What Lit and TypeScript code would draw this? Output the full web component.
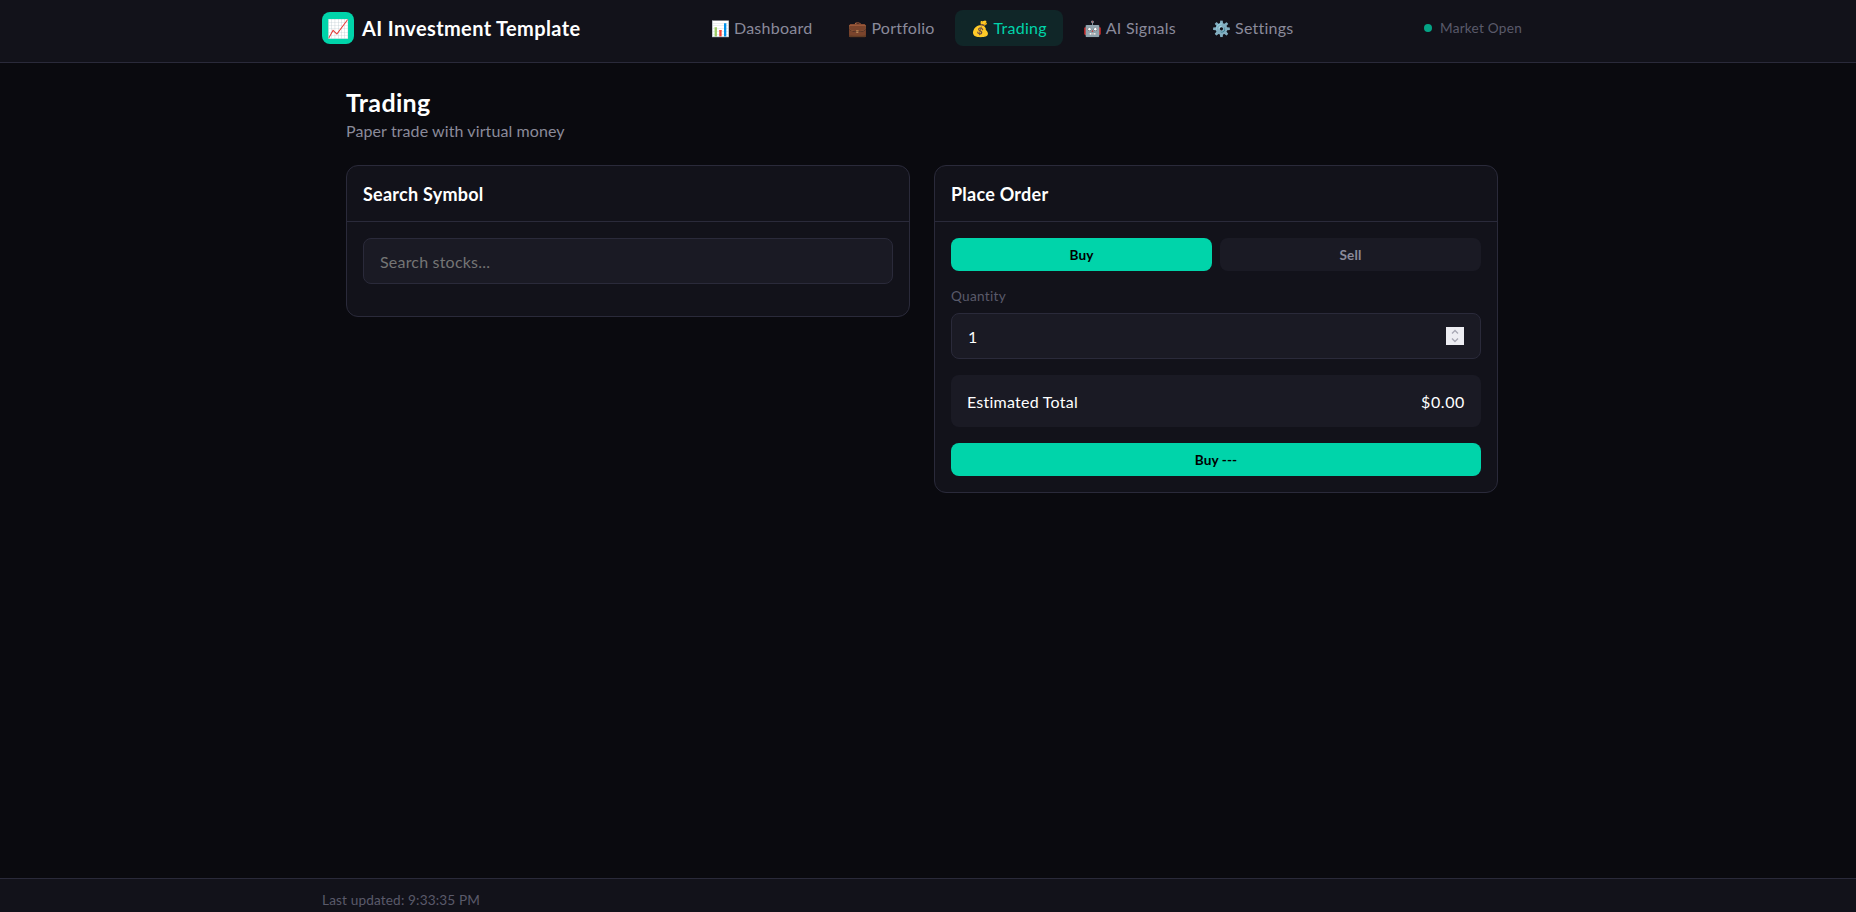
import { css, html, LitElement } from 'lit';
import { customElement } from 'lit/decorators.js';

const NAV = [
  { icon: '📊', label: 'Dashboard' },
  { icon: '💼', label: 'Portfolio' },
  { icon: '💰', label: 'Trading', active: true },
  { icon: '🤖', label: 'AI Signals' },
  { icon: '⚙️', label: 'Settings' },
];

@customElement('app-root')
export class AppRoot extends LitElement {
  static override styles = css`
    :host {
      display: flex;
      flex-direction: column;
      height: 912px;
      overflow: hidden;
      background: #0a0a0f;
      color: #fff;
      font-family: 'Lato', sans-serif;
    }

    .header {
      flex: 0 0 auto;
      height: 62px;
      background: #12121a;
      border-bottom: 1px solid #2a2a3a;
    }

    .wrap {
      width: 1200px;
      margin-inline-start: 322px;
    }

    .header .wrap {
      display: flex;
      align-items: center;
      justify-content: space-between;
      height: 56px;
    }

    .brand {
      display: flex;
      align-items: center;
      gap: 8px;
      font-size: 20px;
      font-weight: 700;
      letter-spacing: 0.37px;
    }

    .logo {
      display: flex;
      align-items: center;
      justify-content: center;
      width: 32px;
      height: 32px;
      border-radius: 8px;
      background: #00d4aa;
      font-size: 18px;
      letter-spacing: 0;
    }

    .nav {
      display: flex;
      gap: 4px;
    }

    .nav a {
      display: flex;
      gap: 4px;
      padding: 8px 16px;
      border-radius: 8px;
      color: #8a8a9a;
      font-size: 16px;
      line-height: 20px;
      letter-spacing: 0.25px;
    }

    .nav a span {
      font-size: 15.2px;
      letter-spacing: 0;
    }

    .nav a.active {
      background: rgba(0, 212, 170, 0.1);
      color: #00d4aa;
    }

    .status {
      display: flex;
      align-items: center;
      gap: 8px;
      color: #5a5a6a;
      font-size: 13.6px;
      letter-spacing: 0.25px;
    }

    .dot {
      width: 8px;
      height: 8px;
      border-radius: 50%;
      background: #00d4aa;
      opacity: 0.75;
    }

    .main {
      flex: 1 1 auto;
      padding: 24px;
      box-sizing: border-box;
    }

    h1 {
      margin: 0 0 4px;
      font-size: 25px;
      line-height: 30px;
      font-weight: 700;
      letter-spacing: 0.35px;
    }

    .sub {
      margin: 0 0 24px;
      color: #8a8a9a;
      font-size: 16px;
      line-height: 20px;
      letter-spacing: 0.1px;
    }

    .grid {
      display: grid;
      grid-template-columns: 1fr 1fr;
      gap: 24px;
      align-items: start;
    }

    .card {
      background: #12121a;
      border: 1px solid #2a2a3a;
      border-radius: 12px;
    }

    .card-head {
      height: 56px;
      padding: 17px 16px 0;
      box-sizing: border-box;
      border-bottom: 1px solid #2a2a3a;
      font-size: 18px;
      line-height: 22px;
      font-weight: 700;
      letter-spacing: 0.25px;
    }

    .card-body {
      padding: 16px;
    }

    .search-body {
      padding-bottom: 32px;
    }

    .field {
      display: flex;
      align-items: center;
      justify-content: space-between;
      height: 46px;
      padding: 0 16px;
      box-sizing: border-box;
      background: #1a1a24;
      border: 1px solid #2a2a3a;
      border-radius: 8px;
      font-size: 16px;
    }

    .placeholder {
      color: #757575;
      letter-spacing: 0.2px;
    }

    .tabs {
      display: grid;
      grid-template-columns: 1fr 1fr;
      gap: 8px;
      margin-bottom: 16px;
    }

    .btn {
      display: flex;
      align-items: center;
      justify-content: center;
      height: 33px;
      border-radius: 8px;
      font-size: 13.6px;
      font-weight: 700;
      letter-spacing: 0.1px;
      color: #000;
      background: #00d4aa;
    }

    .btn.off {
      background: #1a1a24;
      color: #8a8a9a;
    }

    .label {
      margin-bottom: 8px;
      color: #5a5a6a;
      font-size: 13.6px;
      line-height: 18px;
      letter-spacing: 0.3px;
    }

    .spinner {
      display: block;
      width: 18px;
      height: 18px;
      background: #ededf2;
    }

    .total {
      display: flex;
      align-items: center;
      justify-content: space-between;
      height: 52px;
      margin: 16px 0;
      padding: 0 16px;
      background: #1a1a24;
      border-radius: 8px;
      font-size: 16px;
      letter-spacing: 0.25px;
    }

    .amount {
      letter-spacing: 0.6px;
    }

    .footer {
      flex: 0 0 auto;
      height: 33px;
      background: #12121a;
      border-top: 1px solid #2a2a3a;
      color: #5a5a6a;
      font-size: 13.6px;
      line-height: 42px;
      letter-spacing: 0.15px;
    }
  `;

  override render() {
    return html`
      <header class="header">
        <div class="wrap">
          <div class="brand"><span class="logo">📈</span>AI Investment Template</div>
          <nav class="nav">
            ${NAV.map(
              (item) => html`
                <a class=${item.active ? 'active' : ''}><span>${item.icon}</span>${item.label}</a>
              `,
            )}
          </nav>
          <div class="status"><span class="dot"></span>Market Open</div>
        </div>
      </header>
      <main class="main wrap">
        <h1>Trading</h1>
        <p class="sub">Paper trade with virtual money</p>
        <div class="grid">
          <section class="card">
            <div class="card-head">Search Symbol</div>
            <div class="card-body search-body">
              <div class="field"><span class="placeholder">Search stocks...</span></div>
            </div>
          </section>
          <section class="card">
            <div class="card-head">Place Order</div>
            <div class="card-body">
              <div class="tabs">
                <div class="btn">Buy</div>
                <div class="btn off">Sell</div>
              </div>
              <div class="label">Quantity</div>
              <div class="field">
                <span>1</span>
                <svg class="spinner" viewBox="0 0 18 18" fill="none" stroke="#a8a8b4" stroke-width="1.4">
                  <path d="M6 6.5l3-3 3 3M6 11.5l3 3 3-3" />
                </svg>
              </div>
              <div class="total"><span>Estimated Total</span><span class="amount">$0.00</span></div>
              <div class="btn">Buy ---</div>
            </div>
          </section>
        </div>
      </main>
      <footer class="footer"><div class="wrap">Last updated: 9:33:35 PM</div></footer>
    `;
  }
}
